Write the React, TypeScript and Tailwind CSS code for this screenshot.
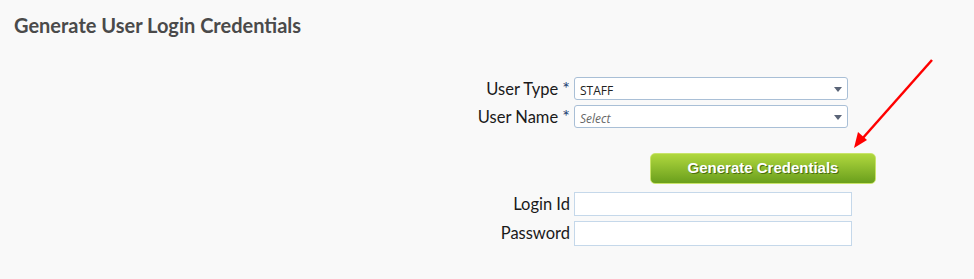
const labelCls = 'text-right text-[16.5px] leading-none text-[#1a1a1a]'
const boxCls = 'h-[23px] w-[274px] border border-[#a9bfd6] rounded-[3px] bg-white'

function Caret() {
  return (
    <svg width="8" height="5" viewBox="0 0 8 5" className="absolute right-[5px] top-[9px]">
      <path d="M0 0h8L4 5z" fill="#5a6477" />
    </svg>
  )
}

export default function App() {
  return (
    <div
      className="relative h-[279px] w-[974px] bg-[#f9f9f9]"
      style={{ fontFamily: 'Lato, "Open Sans", sans-serif' }}
    >
      <h1 className="px-[14px] pt-[10px] text-[20px] leading-[30px] font-bold text-[#4a4a4a]">
        Generate User Login Credentials
      </h1>

      <div className="mt-[37px] ml-[420px] grid grid-cols-[150px_auto] items-center gap-x-[4px]">
        <span className={labelCls}>
          User Type <span className="text-[18px] text-[#1d3d72]">*</span>
        </span>
        <div className={`relative ${boxCls}`}>
          <span
            className="absolute left-[5px] top-[4px] text-[12px] text-[#222]"
            style={{ fontFamily: '"Open Sans", sans-serif' }}
          >
            STAFF
          </span>
          <Caret />
        </div>

        <span className={`${labelCls} mt-[5px]`}>
          User Name <span className="text-[18px] text-[#1d3d72]">*</span>
        </span>
        <div className={`relative mt-[5px] ${boxCls}`}>
          <span
            className="absolute left-[5px] top-[4px] text-[12px] italic text-[#666]"
            style={{ fontFamily: '"Open Sans", sans-serif' }}
          >
            Select
          </span>
          <Caret />
        </div>

        <span />
        <div className="mt-[25px] pl-[76px]">
          <button
            className="h-[31px] w-[226px] rounded-[5px] border border-[#c9e46a] bg-gradient-to-b from-[#b0d83e] to-[#6a9f1c] text-[15px] font-bold text-white [text-shadow:1px_1px_0_#4a6f10]"
            style={{ fontFamily: '"Liberation Sans", Arial, sans-serif' }}
          >
            Generate Credentials
          </button>
        </div>

        <span className={`${labelCls} mt-[8px]`}>Login Id</span>
        <div className="mt-[8px] h-[24px] w-[278px] border border-[#c5d8ea] bg-white" />

        <span className={`${labelCls} mt-[5px]`}>Password</span>
        <div className="mt-[5px] h-[25px] w-[278px] border border-[#c5d8ea] bg-white" />
      </div>

      <svg className="absolute left-0 top-0" width="974" height="279">
        <line x1="932" y1="60" x2="862" y2="139" stroke="#f00" strokeWidth="2.5" />
        <path d="M854 148 L858 132 L867 140 Z" fill="#f00" />
      </svg>
    </div>
  )
}
